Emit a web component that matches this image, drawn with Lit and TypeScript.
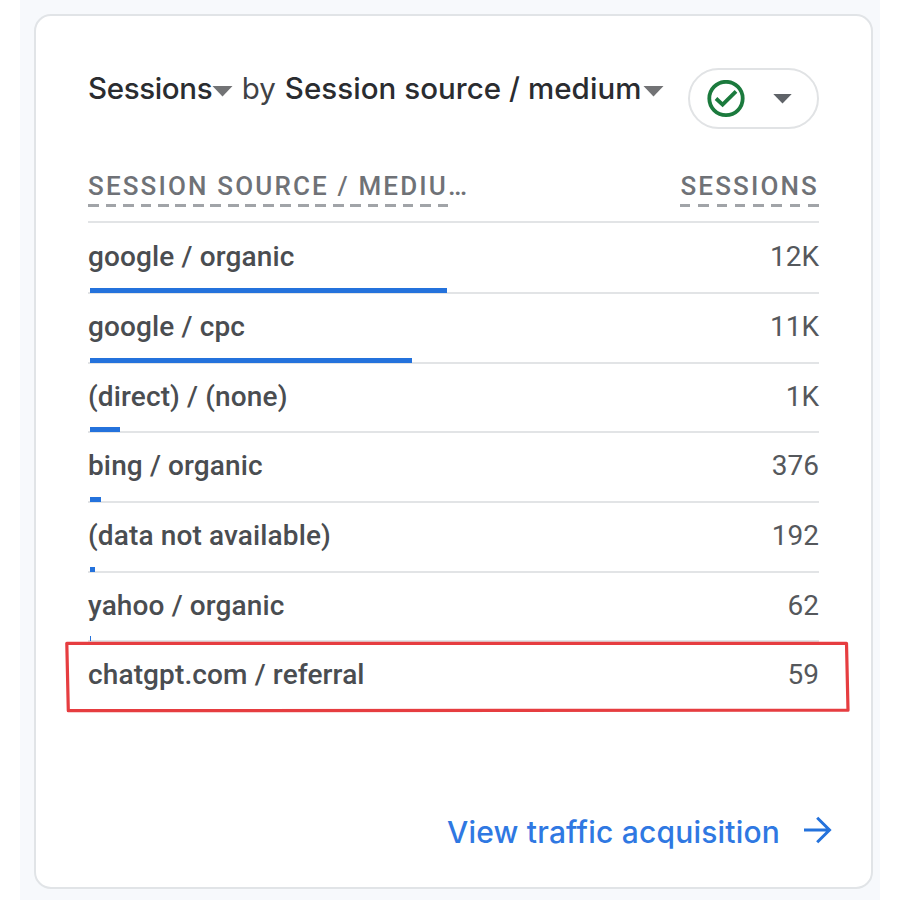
import { LitElement, html, css } from "lit";
import { customElement, state } from "lit/decorators.js";

interface Row {
  name: string;
  value: string;
  bar: number;
}

@customElement("app-root")
export class AppRoot extends LitElement {
  @state() rows: Row[] = [
    { name: "google / organic", value: "12K", bar: 357 },
    { name: "google / cpc", value: "11K", bar: 322 },
    { name: "(direct) / (none)", value: "1K", bar: 30 },
    { name: "bing / organic", value: "376", bar: 11 },
    { name: "(data not available)", value: "192", bar: 5.5 },
    { name: "yahoo / organic", value: "62", bar: 1.4 },
    { name: "chatgpt.com / referral", value: "59", bar: 0 },
  ];

  static styles = css`
    :host {
      display: flex;
      height: 900px;
      box-sizing: border-box;
      padding: 0 20px;
      background: #fff;
      color: #4a4d51;
      font-family: Roboto, "Liberation Sans", sans-serif;
      overflow: hidden;
    }
    .page {
      flex: 1;
      display: flex;
      padding: 14px 7px 11px 14px;
      background: #f7f9fc;
    }
    .card {
      flex: 1;
      display: flex;
      flex-direction: column;
      box-sizing: border-box;
      border: 2px solid #e1e4e7;
      border-radius: 17px;
      background: #fff;
      padding: 52px 38px 0 52px;
    }
    .head {
      display: flex;
      justify-content: space-between;
      height: 61px;
      margin-right: 14px;
    }
    .title {
      display: flex;
      align-items: baseline;
      font: 500 29.5px/41px Inter, sans-serif;
      color: #2a2c30;
      white-space: nowrap;
    }
    .metric {
      letter-spacing: -0.35px;
    }
    .by {
      font-weight: 400;
      color: #3f4246;
      margin: 0 9px 0 8.5px;
    }
    .caret {
      width: 21px;
      height: 11px;
      align-self: flex-start;
      margin-top: 18px;
      fill: #727375;
    }
    .caret.second {
      margin-left: 1.5px;
    }
    .dimension {
      letter-spacing: 0.05px;
    }
    .pill {
      display: flex;
      align-items: center;
      box-sizing: border-box;
      width: 131px;
      height: 61px;
      padding-left: 16.5px;
      border: 2px solid #e1e3e5;
      border-radius: 31px;
    }
    .check {
      width: 38px;
      height: 38px;
    }
    .pill .down {
      width: 19px;
      height: 10px;
      margin: 1px 0 0 28.5px;
      fill: #5f6368;
    }
    .table {
      margin-right: 14px;
    }
    .columns {
      display: flex;
      justify-content: space-between;
      box-sizing: border-box;
      height: 94px;
      padding-top: 41px;
      border-bottom: 2px solid #e2e4e6;
      font-weight: 500;
      font-size: 26px;
      line-height: 32px;
      letter-spacing: 2.15px;
      color: #6f7277;
      white-space: nowrap;
    }
    .label {
      display: inline-block;
      height: 37px;
      background: repeating-linear-gradient(90deg, #a1a4a8 0 10.5px, transparent 10.5px 17.5px) 0 100% / 100% 3px no-repeat;
    }
    .label.right {
      background-image: repeating-linear-gradient(90deg, #a1a4a8 0 10.5px, transparent 10.5px 18.3px);
    }
    .dots {
      letter-spacing: 0;
      font-size: 27px;
    }
    .row {
      display: grid;
      grid-template-rows: 1fr 6px;
      box-sizing: border-box;
      height: 69.65px;
      font-size: 28px;
      line-height: 34px;
      letter-spacing: 0.13px;
    }
    .row:nth-child(2) {
      height: 71.2px;
      padding-top: 0.8px;
    }
    .cells {
      display: flex;
      justify-content: space-between;
      padding-top: 16px;
    }
    .name {
      font-weight: 500;
    }
    .value {
      color: #55585c;
      letter-spacing: 0;
    }
    .track {
      height: 6px;
      background: linear-gradient(#e2e4e6, #e2e4e6) 0 4px / 100% 2px no-repeat;
    }
    .row:last-child .track {
      background: none;
    }
    .bar {
      height: 5px;
      margin-left: 1.5px;
      background: #2472dc;
    }
    .link {
      display: flex;
      align-items: center;
      justify-content: flex-end;
      height: 40px;
      margin-top: 100px;
      font: 500 30px/40px Inter, sans-serif;
      letter-spacing: 0.2px;
      color: #2f78e2;
    }
    .arrow {
      width: 29px;
      height: 28px;
      margin: -5px 1px 0 23px;
      fill: none;
      stroke: #2472dc;
      stroke-width: 3;
    }
    .marker {
      position: absolute;
      left: 60px;
      top: 636px;
      width: 796px;
      height: 82px;
      fill: none;
      stroke: #e63d40;
      stroke-width: 3.2;
      stroke-linejoin: round;
    }
  `;

  render() {
    return html`
      <div class="page">
        <section class="card">
          <div class="head">
            <div class="title">
              <span class="metric">Sessions</span>
              <svg class="caret" viewBox="0 0 21 11"><path d="M0.5 0H20.5L10.5 10.5Z" /></svg>
              <span class="by">by</span>
              <span class="dimension">Session source / medium</span>
              <svg class="caret second" viewBox="0 0 21 11"><path d="M0.5 0H20.5L10.5 10.5Z" /></svg>
            </div>
            <div class="pill">
              <svg class="check" viewBox="0 0 38 38" fill="none" stroke="#1b7a3d">
                <circle cx="19" cy="18.5" r="16.7" stroke-width="3.8" />
                <path d="M9 18.5L15.6 24.7L29 11.3" stroke-width="3.8" />
              </svg>
              <svg class="down" viewBox="0 0 19 10"><path d="M0.3 0H18.7L9.5 9.6Z" /></svg>
            </div>
          </div>
          <div class="table">
            <div class="columns">
              <div><span class="label">SESSION SOURCE / MEDIU</span><span class="dots">…</span></div>
              <span class="label right">SESSIONS</span>
            </div>
            ${this.rows.map(
              (r) => html`<div class="row">
                <div class="cells">
                  <span class="name">${r.name}</span><span class="value">${r.value}</span>
                </div>
                <div class="track"><div class="bar" style="width:${r.bar}px"></div></div>
              </div>`
            )}
          </div>
          <div class="link">
            <span>View traffic acquisition</span>
            <svg class="arrow" viewBox="0 0 29 28">
              <path d="M1 14H26.5M14.2 1.7L26.5 14L14.2 26.3" />
            </svg>
          </div>
        </section>
      </div>
      <svg class="marker" viewBox="60 636 796 82">
        <path d="M66.8 643.3L846.5 643.3L848 710.2L68.3 710.7Z" />
      </svg>
    `;
  }
}
